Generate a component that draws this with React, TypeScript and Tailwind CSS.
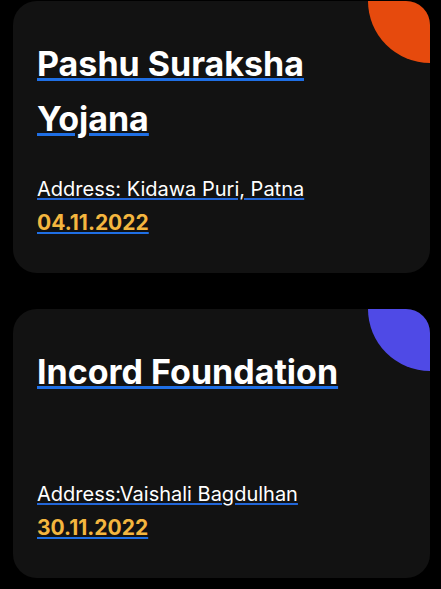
interface EventProps {
  title: string;
  address: string;
  date: string;
  blob: string;
  height: string;
}

function EventCard(props: EventProps) {
  return (
    <div
      className={`relative flex flex-col overflow-hidden rounded-[24px] bg-[#121212] px-6 pt-[35px] pb-[34px] ${props.height}`}
    >
      <div
        className={`absolute -top-[62px] -right-[62px] h-[124px] w-[124px] rounded-full ${props.blob}`}
      />
      <a
        href="#"
        className="relative w-fit text-[34px] leading-[55px] font-bold text-white underline decoration-[#1f6fe5] decoration-[3px]"
      >
        {props.title}
      </a>
      <div className="mt-auto flex flex-col">
        <a
          href="#"
          className="w-fit text-[20px] leading-[33px] text-white underline decoration-[#2266d8] decoration-[1.5px] underline-offset-2"
        >
          {props.address}
        </a>
        <a
          href="#"
          className="w-fit text-[21px] leading-[33px] font-bold text-[#f4b63f] underline decoration-[#1f6fe5] decoration-2 underline-offset-2"
        >
          {props.date}
        </a>
      </div>
    </div>
  );
}

export default function App() {
  return (
    <div
      className="flex min-h-[589px] flex-col gap-[36px] bg-black px-[13px] pt-px pr-[11px]"
      style={{ fontFamily: 'Inter, "Noto Sans", sans-serif' }}
    >
      <EventCard
        title="Pashu Suraksha Yojana"
        address="Address: Kidawa Puri, Patna"
        date="04.11.2022"
        blob="bg-[#e64a0d]"
        height="h-[272px]"
      />
      <EventCard
        title="Incord Foundation"
        address="Address:Vaishali Bagdulhan"
        date="30.11.2022"
        blob="bg-[#4f4ae6]"
        height="h-[269px]"
      />
    </div>
  );
}
